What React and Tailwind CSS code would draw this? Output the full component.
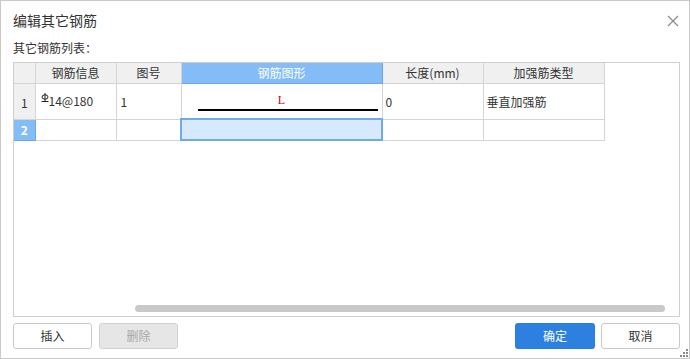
import React from "react";

const font = { fontFamily: '"Noto Sans CJK SC", "Noto Sans", sans-serif' };

const RebarGlyph = () => (
  <svg width="8" height="10" viewBox="0 0 8 10" className="inline-block align-top mt-[1px]">
    <line x1="4" y1="0" x2="4" y2="9" stroke="#222" strokeWidth="1" />
    <ellipse cx="4" cy="4" rx="3" ry="2.2" fill="none" stroke="#222" strokeWidth="1" />
    <line x1="0.5" y1="8.5" x2="7.5" y2="8.5" stroke="#222" strokeWidth="1" />
  </svg>
);

const App = () => {
  const cols = [
    { w: "w-[21px]", label: "" },
    { w: "w-[81px]", label: "钢筋信息" },
    { w: "w-[65px]", label: "图号" },
    { w: "w-[201px]", label: "钢筋图形", active: true },
    { w: "w-[101px]", label: "长度(mm)" },
    { w: "w-[121px]", label: "加强筋类型" },
  ];

  return (
    <div
      className="w-[690px] h-[359px] bg-white border border-[#c9c9c9] flex flex-col text-[#333] overflow-hidden"
      style={font}
    >
      {/* title */}
      <div className="flex items-center justify-between pl-[12px] pr-[10px] h-[38px] pt-[1px]">
        <div className="text-[14px] text-[#333]">编辑其它钢筋</div>
        <svg width="12" height="12" viewBox="0 0 12 12">
          <path d="M1 1 L11 11 M11 1 L1 11" stroke="#8a8a8a" strokeWidth="1.2" />
        </svg>
      </div>

      <div className="pl-[12px] text-[12px] leading-[16px] h-[23px] pt-[1px]">其它钢筋列表：</div>

      {/* table area */}
      <div className="mx-[12px] w-[667px] h-[255px] border border-[#cfcfcf] flex flex-col relative">
        <table className="border-collapse table-fixed text-[12px] w-[590px]">
          <thead>
            <tr className="h-[20px]">
              {cols.map((c, i) => (
                <th
                  key={i}
                  className={`${c.w} p-0 font-normal text-center border ${
                    c.active
                      ? "bg-[#84bcf7] text-white border-[#6aa8ee]"
                      : "bg-[#f0f0f0] border-[#d4d4d4]"
                  } border-t-0 ${i === 0 ? "border-l-0" : ""}`}
                >
                  {c.label}
                </th>
              ))}
            </tr>
          </thead>
          <tbody>
            <tr className="h-[36px]">
              <td className="p-0 text-center bg-[#f0f0f0] border border-[#d4d4d4] border-l-0 pt-[4px]">1</td>
              <td className="px-[5px] border border-[#d4d4d4] whitespace-nowrap">
                <RebarGlyph />
                <span>14@180</span>
              </td>
              <td className="px-[4px] border border-[#d4d4d4] pt-[2px]">1</td>
              <td className="p-0 border border-[#d4d4d4]">
                <div className="flex flex-col items-center pt-[3px]">
                  <span
                    className="text-[12px] leading-[12px] text-[#e00000]"
                    style={{ fontFamily: '"Liberation Serif", serif' }}
                  >
                    L
                  </span>
                  <div className="w-[180px] h-[2px] bg-black mt-[3px] ml-[13px]" />
                </div>
              </td>
              <td className="px-[3px] border border-[#d4d4d4] pt-[2px]">0</td>
              <td className="px-[3px] border border-[#d4d4d4] pt-[2px]">垂直加强筋</td>
            </tr>
            <tr className="h-[21px]">
              <td className="p-0 text-center bg-[#84bcf7] border border-[#6aa8ee] border-l-0 text-white font-bold">2</td>
              <td className="border border-[#d4d4d4]"></td>
              <td className="border border-[#d4d4d4]"></td>
              <td className="border-2 border-[#6faae9] bg-[#d7e9fd]"></td>
              <td className="border border-[#d4d4d4]"></td>
              <td className="border border-[#d4d4d4]"></td>
            </tr>
          </tbody>
        </table>
        <div className="flex-1" />
        <div className="h-[11px] flex items-start pl-[121px] pr-[14px]">
          <div className="flex-1 h-[7px] rounded-full bg-[#c9c9c9]" />
        </div>
      </div>

      {/* buttons */}
      <div className="flex items-center pl-[12px] pr-[9px] mt-[6px] text-[12px]">
        <button className="w-[79px] h-[26px] border border-[#c9c9c9] rounded-[3px] bg-white text-[#333]">插入</button>
        <button className="w-[79px] h-[26px] ml-[7px] border border-[#d2d2d2] rounded-[3px] bg-[#e6e6e6] text-[#a8a8a8]">删除</button>
        <div className="flex-1" />
        <button className="w-[80px] h-[26px] rounded-[3px] bg-[#2b80e0] text-white">确定</button>
        <button className="w-[79px] h-[26px] ml-[6px] border border-[#c9c9c9] rounded-[3px] bg-white text-[#333]">取消</button>
      </div>
      <div className="flex justify-end pr-[1px] mt-auto pb-[1px]">
        <svg width="8" height="8" viewBox="0 0 8 8">
          <rect x="6" y="0" width="2" height="2" fill="#8a8a8a" />
          <rect x="3" y="3" width="2" height="2" fill="#8a8a8a" />
          <rect x="6" y="3" width="2" height="2" fill="#8a8a8a" />
          <rect x="0" y="6" width="2" height="2" fill="#8a8a8a" />
          <rect x="3" y="6" width="2" height="2" fill="#8a8a8a" />
          <rect x="6" y="6" width="2" height="2" fill="#8a8a8a" />
        </svg>
      </div>
    </div>
  );
};

export default App;
